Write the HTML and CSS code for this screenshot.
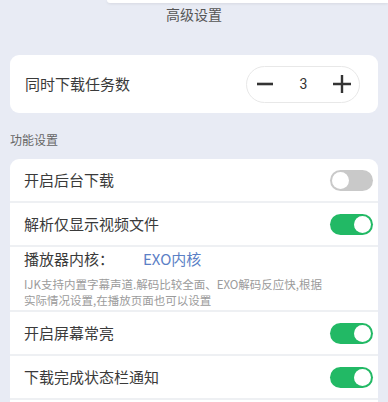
FILE: index.html
```html
<!DOCTYPE html>
<html lang="zh-CN">
<head>
    <meta charset="UTF-8">
    <title>高级设置</title>
    <link rel="stylesheet" href="styles.css">
</head>
<body>
    <div class="sheet-edge"></div>
    <h1 class="page-title">高级设置</h1>
    <main class="content">
        <div class="card stepper-card">
            <span class="row-label">同时下载任务数</span>
            <div class="stepper">
                <button class="step-btn" aria-label="减少">
                    <svg width="18" height="18" viewBox="0 0 18 18"><path d="M1 9h16" stroke="#333" stroke-width="2.6"/></svg>
                </button>
                <span class="step-value">3</span>
                <button class="step-btn" aria-label="增加">
                    <svg width="18" height="18" viewBox="0 0 18 18"><path d="M0 9h18M9 0v18" stroke="#333" stroke-width="2.4"/></svg>
                </button>
            </div>
        </div>

        <p class="section-label">功能设置</p>

        <div class="card list-card">
            <div class="row">
                <span class="row-label">开启后台下载</span>
                <span class="switch"></span>
            </div>
            <div class="row">
                <span class="row-label">解析仅显示视频文件</span>
                <span class="switch on"></span>
            </div>
            <div class="row row-block">
                <div class="kernel-line">
                    <span class="row-label">播放器内核：</span>
                    <span class="kernel-value">EXO内核</span>
                </div>
                <p class="row-desc">IJK支持内置字幕声道.解码比较全面、EXO解码反应快,根据<br>实际情况设置,在播放页面也可以设置</p>
            </div>
            <div class="row">
                <span class="row-label">开启屏幕常亮</span>
                <span class="switch on"></span>
            </div>
            <div class="row">
                <span class="row-label">下载完成状态栏通知</span>
                <span class="switch on"></span>
            </div>
            <div class="row">
                <span class="row-label">&nbsp;</span>
            </div>
        </div>
    </main>
</body>
</html>
```

FILE: styles.css
```css
body { margin: 0; background-color: #e8ebf4; font-family: "Noto Sans CJK SC", "Noto Sans", sans-serif; color: #333; overflow: hidden; }
.sheet-edge { height: 3px; margin-left: 107px; background: white; border-bottom-left-radius: 4px; box-shadow: 0 1px 3px rgba(0,0,0,0.08); }
.page-title { margin: 1px 0 0; text-align: center; font-size: 14px; font-weight: normal; line-height: 20px; color: #555; }
.content { padding: 0 10px; }
.card { background: white; border-radius: 9px; }
.stepper-card { display: flex; align-items: center; justify-content: space-between; height: 58px; margin-top: 31px; padding: 0 18px 0 15px; }
.row-label { font-size: 15px; line-height: 20px; color: #3a3a3a; }
.stepper { display: flex; align-items: center; justify-content: space-between; box-sizing: border-box; width: 114px; height: 37px; padding: 0 8px 0 9px; border: 1px solid #e8e8e8; border-radius: 19px; }
.step-btn { display: flex; padding: 0; border: none; background: none; }
.step-value { font-family: "Roboto", sans-serif; font-size: 14px; color: #333; }
.section-label { margin: 19px 0 0; font-size: 12px; line-height: 16px; color: #666; }
.list-card { margin-top: 11px; border-bottom-left-radius: 0; border-bottom-right-radius: 0; }
.row { display: flex; align-items: center; justify-content: space-between; height: 42px; padding: 0 5px 0 14px; border-top: 2px solid #eef0f3; }
.row:first-child { border-top: none; }
.row-block { display: block; height: auto; padding: 2px 14px 2px; }
.kernel-line { display: flex; align-items: center; gap: 29px; }
.kernel-value { font-size: 15px; line-height: 20px; color: #5b80c6; }
.row-desc { margin: 7px 0 0; font-size: 11.5px; line-height: 16px; color: #9b9b9b; }
.switch { position: relative; width: 43px; height: 21px; border-radius: 11px; background: #c9c9c9; }
.switch::after { content: ""; position: absolute; top: 2px; left: 2px; width: 17px; height: 17px; border-radius: 50%; background: white; }
.switch.on { background: #22b965; }
.switch.on::after { left: 24px; }
```
